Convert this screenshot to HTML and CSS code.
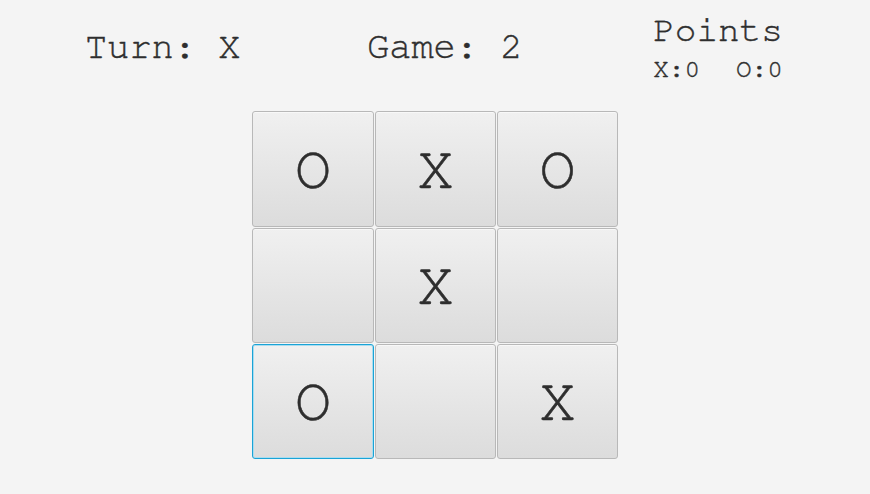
FILE: index.html
```html
<!DOCTYPE html>
<html>
<head>
<meta charset="utf-8">
<link rel="stylesheet" href="styles.css">
</head>
<body>
<div class="app">
  <div class="header">
    <div class="turn">Turn: X</div>
    <div class="game">Game: 2</div>
    <div class="points">
      <div class="points-title">Points</div>
      <div class="points-score"><span>X:0</span><span>O:0</span></div>
    </div>
  </div>
  <div class="board">
    <button class="cell">O</button>
    <button class="cell">X</button>
    <button class="cell">O</button>
    <button class="cell"></button>
    <button class="cell">X</button>
    <button class="cell"></button>
    <button class="cell focused">O</button>
    <button class="cell"></button>
    <button class="cell">X</button>
  </div>
</div>
</body>
</html>
```

FILE: styles.css
```css
html, body {
  margin: 0;
  padding: 0;
  background: #f4f4f4;
}
.app {
  width: 870px;
  height: 494px;
  font-family: "Nimbus Mono PS", "Nimbus Mono L", "FreeMono", "Liberation Mono", "Courier New", monospace;
  color: #2e2e2e;
  -webkit-text-stroke: 0.4px #2e2e2e;
}
.header {
  display: flex;
  align-items: flex-start;
  padding-left: 85px;
  height: 111px;
}
.turn {
  font-size: 37px;
  margin-top: 28px;
  width: 282px;
}
.game {
  font-size: 37px;
  margin-top: 28px;
  width: 283px;
}
.points {
  display: flex;
  flex-direction: column;
  align-items: center;
  width: 136px;
  margin-top: 10px;
}
.points-title {
  font-size: 36px;
  line-height: 40px;
}
.points-score {
  display: flex;
  gap: 36px;
  font-size: 26px;
  line-height: 30px;
  margin-top: 4px;
}
.board {
  display: grid;
  grid-template-columns: 122px 121px 121px;
  grid-template-rows: 116px 115px 115px;
  gap: 1px;
  width: 366px;
  margin-left: 252px;
}
.cell {
  box-sizing: border-box;
  border: 1px solid #b8b8b8;
  border-radius: 3px;
  background: linear-gradient(#f0f0f0, #dcdcdc);
  font-family: inherit;
  font-size: 61px;
  color: #2e2e2e;
  -webkit-text-stroke: 0.5px #2e2e2e;
  padding: 0;
  display: flex;
  align-items: center;
  justify-content: center;
  box-shadow: inset 0 1px 0 #f8f8f8;
}
.cell.focused {
  border-color: #1aa3d6;
  box-shadow: inset 0 0 0 1px #a9dcef;
}
```
